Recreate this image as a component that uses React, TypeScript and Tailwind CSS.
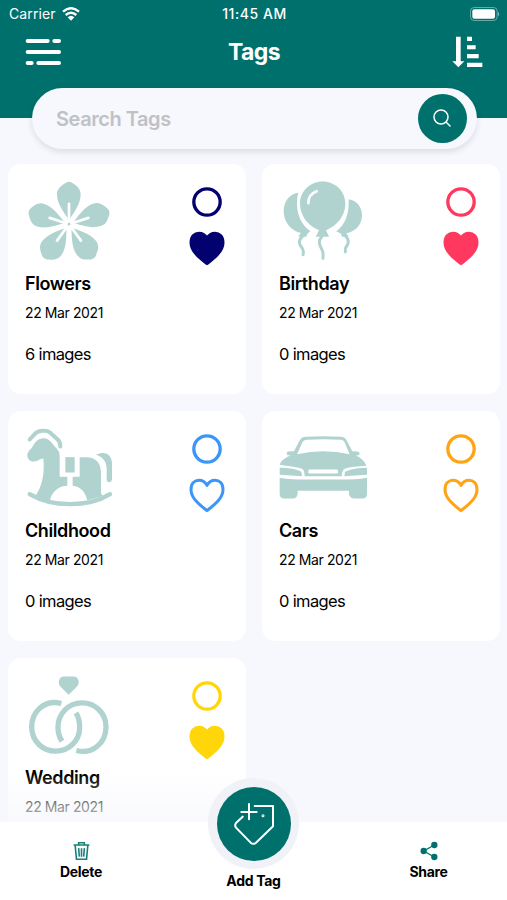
import React from "react";

type Tag = {
  name: string;
  date: string;
  count?: number;
  color: string;
  liked: boolean;
  art: React.ReactNode;
};

const PETAL =
  "M207 182 C198 164 171 136 171 104 C171 84 187 76 199 68 Q207 64 215 68 C227 76 242 84 242 104 C242 136 216 164 207 182Z";

const FlowerArt = () => (
  <svg viewBox="75 55 270 260" className="w-[90px] h-[87px]" fill="#b0d3d0">
    {[0, 72, 144, 216, 288].map((deg) => (
      <g key={deg} transform={`rotate(${deg} 207 193)`}>
        <path d={PETAL} />
        <path d="M207 188V132" stroke="#fff" strokeWidth="8" strokeLinecap="round" />
      </g>
    ))}
    <circle cx="207" cy="193" r="13" fill="#fff" />
    <circle cx="207" cy="193" r="4" />
  </svg>
);

const BalloonArt = () => (
  <svg viewBox="78 55 270 260" className="w-[90px] h-[87px]" fill="#b0d3d0">
    <path d="M136 99C106 103 92 129 92 154C92 188 116 213 143 219L136 231H160L163 222L172 214C146 196 132 166 132 131C132 119 133 109 136 99Z" />
    <path d="M287 118C311 122 327 140 327 166C327 194 308 215 280 220L287 231H267L264 222L250 214C275 196 289 165 287 118Z" />
    <path d="M209 65C247 65 277 94 277 132C277 172 247 201 219 211L228 231H188L198 211C170 201 141 172 141 132C141 94 171 65 209 65Z" />
    <path d="M166 130C166 112 177 99 191 94" fill="none" stroke="#fff" strokeWidth="8" strokeLinecap="round" />
    <g fill="none" stroke="#b0d3d0" strokeWidth="9" strokeLinecap="round">
      <path d="M149 229C132 245 141 256 147 264C152 271 152 278 150 285" />
      <path d="M207 229C192 246 202 260 207 270C212 278 210 288 210 295" />
      <path d="M277 228C291 244 286 252 280 260C275 266 276 271 277 276" />
    </g>
  </svg>
);

const HorseArt = () => (
  <svg viewBox="75 60 270 260" className="w-[90px] h-[87px]" fill="#b0d3d0">
    <path d="M89 103L102 89C113 75 139 73 150 82L173 103Q181 110 181 124" fill="none" stroke="#b0d3d0" strokeWidth="12" strokeLinecap="round" />
    <path d="M102 169C88 170 81 158 82 147C84 138 91 134 96 127C104 111 114 99 131 99C149 99 158 117 170 130Q179 139 179 151V215H202V242C177 243 156 258 150 286L105 275C124 246 135 211 130 160C119 161 115 168 102 169Z" />
    <path d="M196 156H224V202H196Z" />
    <path d="M239 156H258C289 156 303 174 303 203V264L308 272L262 286C256 259 240 244 218 242V215H239Z" />
    <path d="M288 149C310 137 335 143 336 174V224Q335 231 328 231Q320 231 320 224V190C320 170 307 154 288 149Z" />
    <path d="M89 267C111 280 145 297 210 297C275 297 309 280 330 267" fill="none" stroke="#b0d3d0" strokeWidth="13" strokeLinecap="round" />
  </svg>
);

const CarArt = () => (
  <svg viewBox="78 60 270 260" className="w-[90px] h-[87px]" fill="#b0d3d0">
    <path
      fillRule="evenodd"
      d="M103 150L101 142Q103 138 116 138H123L140 106Q145 96 158 95Q211 91 263 95Q276 96 281 106L298 138H304Q320 138 320 144L318 150H309C325 159 337 170 340 182C318 184 292 185 275 191Q267 196 266 213H155Q155 196 147 191C130 185 102 183 80 179Q83 163 113 150ZM132 147Q210 130 290 147L274 110Q272 105 264 104Q211 100 160 104Q152 105 149 110Z"
    />
    <rect x="166" y="193" width="89" height="12" rx="4" fill="#fff" />
    <path d="M80 188C102 188 125 190 145 200L147 213L80 209Z" />
    <path d="M342 188C320 188 297 190 276 200L274 213L342 209Z" />
    <path d="M80 218C120 225 160 223 211 223C262 223 302 225 342 218V268Q341 280 329 280H304Q292 280 288 268V257H134V266Q132 280 120 280H94Q81 280 80 268Z" />
  </svg>
);

const RingsArt = () => (
  <svg viewBox="75 65 270 260" className="w-[90px] h-[87px]" fill="#b0d3d0">
    <path d="M206 133L181 108C172 98 177 78 191 78H221C236 78 241 98 231 108Z" />
    <g fill="none" stroke="#b0d3d0" strokeWidth="16">
      <path d="M184 159C134 145 95 184 95 229C95 273 129 302 167 302C208 302 239 270 239 230Q239 204 228 187" />
      <path d="M229 300C278 313 318 276 318 230C318 186 284 157 246 157C205 157 174 190 174 230Q174 254 186 272" />
    </g>
  </svg>
);

const tags: Tag[] = [
  { name: "Flowers", date: "22 Mar 2021", count: 6, color: "#03006f", liked: true, art: <FlowerArt /> },
  { name: "Birthday", date: "22 Mar 2021", count: 0, color: "#ff3860", liked: true, art: <BalloonArt /> },
  { name: "Childhood", date: "22 Mar 2021", count: 0, color: "#3b96f8", liked: false, art: <HorseArt /> },
  { name: "Cars", date: "22 Mar 2021", count: 0, color: "#ffa412", liked: false, art: <CarArt /> },
  { name: "Wedding", date: "22 Mar 2021", color: "#ffd60a", liked: true, art: <RingsArt /> },
];

const Marks = ({ color, liked }: { color: string; liked: boolean }) => (
  <svg viewBox="0 0 108 240" className="w-9 h-20" stroke={color} fill="none">
    <circle cx="54" cy="45" r="39.5" strokeWidth="10" />
    <path
      d="M54 230C36 216 6 194 6 167C6 148 17 139 30 139C42 139 49 145 54 154C59 145 66 139 78 139C91 139 102 148 102 167C102 194 72 216 54 230Z"
      fill={liked ? color : "none"}
      strokeWidth="9"
      strokeLinejoin="round"
    />
  </svg>
);

const TagCard = ({ tag }: { tag: Tag }) => (
  <article className="h-[230px] rounded-[13px] bg-white pl-[17.5px] pr-[21px] pt-[14px] text-black">
    <div className="flex items-start justify-between h-[94px]">
      {tag.art}
      <div className="pt-[9px]">
        <Marks color={tag.color} liked={tag.liked} />
      </div>
    </div>
    <h2 className="text-[18px] leading-6 font-semibold tracking-[-0.4px]">{tag.name}</h2>
    <p className="mt-[7px] text-[14px] leading-5 tracking-[-0.4px]">{tag.date}</p>
    {tag.count !== undefined && (
      <p className="mt-[19px] text-[16.5px] leading-6 tracking-[-0.65px]">{tag.count} images</p>
    )}
  </article>
);

const StatusBar = () => (
  <div className="flex items-center justify-between h-[27px] pl-[9px] pr-[7px] text-[14px]">
    <div className="flex flex-1 items-center gap-[6px]">
      <span className="tracking-[0.1px]">Carrier</span>
      <svg viewBox="0 0 54 42" className="w-[18px] h-[14px]" fill="none" stroke="#fff" strokeWidth="7">
        <path d="M3 14Q27-7 51 14M11 24Q27 10 43 24" />
        <path d="M27 41L17 31Q27 22 37 31Z" fill="#fff" stroke="none" />
      </svg>
    </div>
    <span className="font-medium tracking-[0.55px]">11:45 AM</span>
    <div className="flex flex-1 justify-end">
      <svg viewBox="0 0 90 42" className="w-[30px] h-[14px]">
        <rect x="1.5" y="1.5" width="80" height="39" rx="11" fill="none" stroke="#fff" strokeOpacity=".4" strokeWidth="3" />
        <rect x="7" y="7" width="68" height="28" rx="6" fill="#fff" />
        <path d="M84 14Q91 21 84 28Z" fill="#fff" fillOpacity=".5" />
      </svg>
    </div>
  </div>
);

const Header = () => (
  <header className="h-[118px] shrink-0 bg-[#00706d] text-white">
    <StatusBar />
    <div className="flex items-center justify-between h-[50px] pl-[25px] pr-6">
      <div className="flex-1">
        <svg viewBox="0 0 108 84" className="w-9 h-7" stroke="#fff" strokeWidth="12" strokeLinecap="round">
          <path d="M8 9H68M88 9H102M8 42H102M8 75H20M40 75H102" />
        </svg>
      </div>
      <h1 className="text-[23px] font-bold tracking-[-0.6px]">Tags</h1>
      <div className="flex flex-1 justify-end">
        <svg viewBox="0 0 93 96" className="w-[31px] h-8" fill="#fff">
          <path d="M12 2H26V76H37L19 94L1 76H12Z" />
          <path d="M45 2H60V15H45ZM45 28H71V40H45ZM45 54H80V67H45ZM45 80H91V93H45Z" />
        </svg>
      </div>
    </div>
  </header>
);

const SearchBar = () => (
  <div className="relative z-10 -mt-[30.5px] ml-[31.5px] mr-[30.5px] h-[61.5px] shrink-0 flex items-center justify-between rounded-full bg-[#f6f8fe] pl-[24.5px] pr-[10px] shadow-[0_3px_6px_rgba(0,0,0,0.11)]">
    <span className="pt-[2px] text-[20px] font-semibold tracking-[-0.45px] text-[#c0c1c5]">Search Tags</span>
    <button className="flex items-center justify-center size-[49px] rounded-full bg-[#00706d]">
      <svg viewBox="0 0 54 54" className="size-[18px]" fill="none" stroke="#fff" strokeWidth="4.5" strokeLinecap="round">
        <circle cx="24" cy="24" r="21" />
        <path d="M39 39L51 51" />
      </svg>
    </button>
  </div>
);

const BottomNav = () => (
  <nav className="relative z-10 flex justify-between h-[78px] shrink-0 bg-white text-[14px] font-bold tracking-[-0.3px] text-black">
    <div className="flex w-[162px] flex-col items-center pt-[19px]">
      <svg viewBox="0 0 54 60" className="w-[17px] h-5" fill="none" stroke="#16807c" strokeWidth="5">
        <path d="M2 11H52M18 10V4H36V10M7 13L11 56H43L47 13M18 21L20 48M27 21V48M36 21L34 48" />
      </svg>
      <span className="leading-5 mt-px">Delete</span>
    </div>
    <div className="-mt-[44px] flex flex-col items-center">
      <div className="flex size-[91px] items-center justify-center rounded-full bg-[#f0f2f8]">
        <div className="flex size-[74px] items-center justify-center rounded-full bg-[#00706d]">
          <svg viewBox="0 0 120 126" className="w-10 h-[42px]" fill="none" stroke="#fff" strokeWidth="6" strokeLinecap="round" strokeLinejoin="round">
            <path d="M45 3V49M22 27H68" />
            <path d="M62 9H117V70L66 119Q58 126 50 119L6 74Q1 67 6 60L26 41" />
            <circle cx="87" cy="38" r="1.5" />
          </svg>
        </div>
      </div>
      <span className="leading-5 mt-[2px]">Add Tag</span>
    </div>
    <div className="flex w-[162px] flex-col items-center pl-[5px] pt-[19px]">
      <svg viewBox="0 0 54 60" className="w-[18px] h-5" fill="#00706d" stroke="#00706d" strokeWidth="4">
        <path d="M43 12L11 30L43 48" fill="none" />
        <circle cx="43" cy="12" r="7.5" />
        <circle cx="11" cy="30" r="7.5" />
        <circle cx="43" cy="48" r="7.5" />
      </svg>
      <span className="leading-5 mt-px">Share</span>
    </div>
  </nav>
);

const App = () => {
  return (
    <div className="flex h-[900px] w-[507px] flex-col overflow-hidden bg-[#f6f8fe] font-['Inter','Liberation_Sans',sans-serif]">
      <Header />
      <SearchBar />
      <main className="relative flex-1 min-h-0 overflow-hidden pt-[15px] pl-[7.5px]">
        <div className="grid grid-cols-[238px_238px] gap-x-4 gap-y-[16.75px]">
          {tags.map((tag) => (
            <TagCard key={tag.name} tag={tag} />
          ))}
        </div>
        <div className="absolute inset-x-0 bottom-0 h-[48px] bg-linear-to-b from-[#f7f8fc]/0 to-[#f7f8fc]/80" />
      </main>
      <BottomNav />
    </div>
  );
};

export default App;
